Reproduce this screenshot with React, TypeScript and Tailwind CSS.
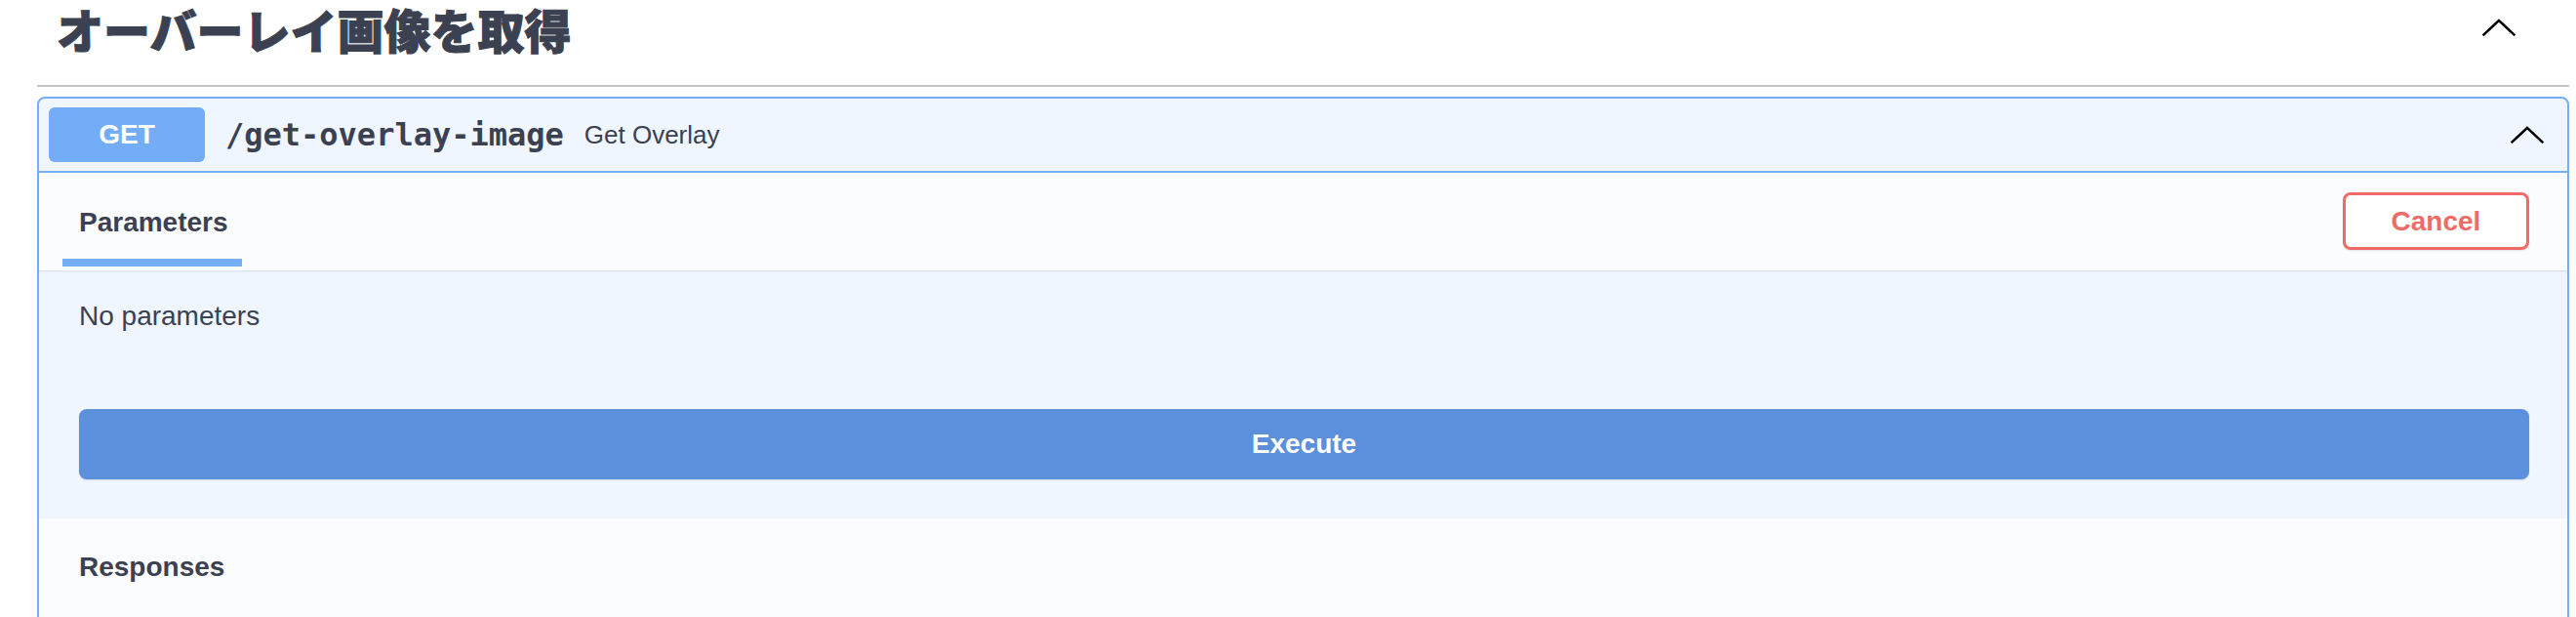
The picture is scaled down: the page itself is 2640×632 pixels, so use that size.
import React from 'react';

const textColor = 'text-[#3b4151]';

const Chevron: React.FC<{ className: string }> = ({ className }) => (
  <svg className={className} viewBox="0 0 34 18" fill="none">
    <polyline points="1.5,16.5 17,2 32.5,16.5" stroke="#000" strokeWidth="2.4" strokeLinecap="square" />
  </svg>
);

export default function App() {
  return (
    <div className="w-full h-[632px] overflow-hidden bg-white font-['Liberation_Sans',Arial,sans-serif]">
      <div className="ml-[38px] mr-[7px]">
        {/* Tag header */}
        <div className="flex items-start justify-between h-[89px] border-b-2 border-[#c6c6c8]">
          <h3 className={`pl-[20px] text-[48px] leading-[58px] font-black whitespace-nowrap font-['Noto_Sans_CJK_JP',sans-serif] [-webkit-text-stroke:1px_#3b4151] ${textColor}`}>
            オーバーレイ画像を取得
          </h3>
          <Chevron className="w-[34px] h-[18px] mt-[19px] mr-[55px]" />
        </div>

        {/* Operation block */}
        <div className="mt-[10px] border-2 border-[#76aef9] rounded-t-[8px] bg-[#eff6ff]">
          {/* Summary */}
          <div className="flex items-center h-[76px] pl-[10px] pr-[24px] border-b-2 border-[#76aef9]">
            <div className="flex items-center justify-center w-[160px] h-[56px] rounded-[6px] bg-[#73adf8]">
              <span className="text-white text-[28px] font-bold leading-none">GET</span>
            </div>
            <span className={`ml-[21px] whitespace-nowrap font-['DejaVu_Sans_Mono','Liberation_Mono',monospace] font-bold text-[32px] leading-[40px] ${textColor}`}>
              /get-overlay-image
            </span>
            <span className={`ml-[21px] whitespace-nowrap text-[26px] leading-[40px] ${textColor}`}>
              Get Overlay
            </span>
            <div className="flex-1" />
            <Chevron className="w-[34px] h-[18px]" />
          </div>

          {/* Section header */}
          <div className="flex justify-between h-[100px] bg-[#fbfcfe] shadow-[0_1px_2px_rgba(0,0,0,0.1)] relative">
            <div className="pl-[24px] pt-[37px]">
              <div className={`pl-[17px] text-[28px] leading-[28px] font-bold whitespace-nowrap ${textColor}`}>
                Parameters
              </div>
              <div className="mt-[23px] w-[184px] h-[8px] bg-[#74adf8]" />
            </div>
            <button className="mt-[20px] mr-[39px] w-[191px] h-[59px] rounded-[8px] border-[3px] border-[#ee6b68] bg-white text-[#ee6b68] text-[28px] font-bold shadow-[0_1px_2px_rgba(0,0,0,0.1)]">
              Cancel
            </button>
          </div>

          {/* Body */}
          <div className="pl-[41px] pr-[39px] pt-[33px] pb-[40px]">
            <div className={`text-[28px] leading-[28px] whitespace-nowrap ${textColor}`}>
              No parameters
            </div>
            <button className="mt-[81px] w-full h-[72px] rounded-[8px] bg-[#5c8fdc] text-white text-[28px] font-bold shadow-[0_1px_2px_rgba(0,0,0,0.12)] block">
              Execute
            </button>
          </div>

          {/* Responses */}
          <div className="h-[120px] bg-[#fbfcfe] pl-[41px] pt-[36px]">
            <div className={`text-[28px] leading-[28px] font-bold whitespace-nowrap ${textColor}`}>
              Responses
            </div>
          </div>
        </div>
      </div>
    </div>
  );
}
